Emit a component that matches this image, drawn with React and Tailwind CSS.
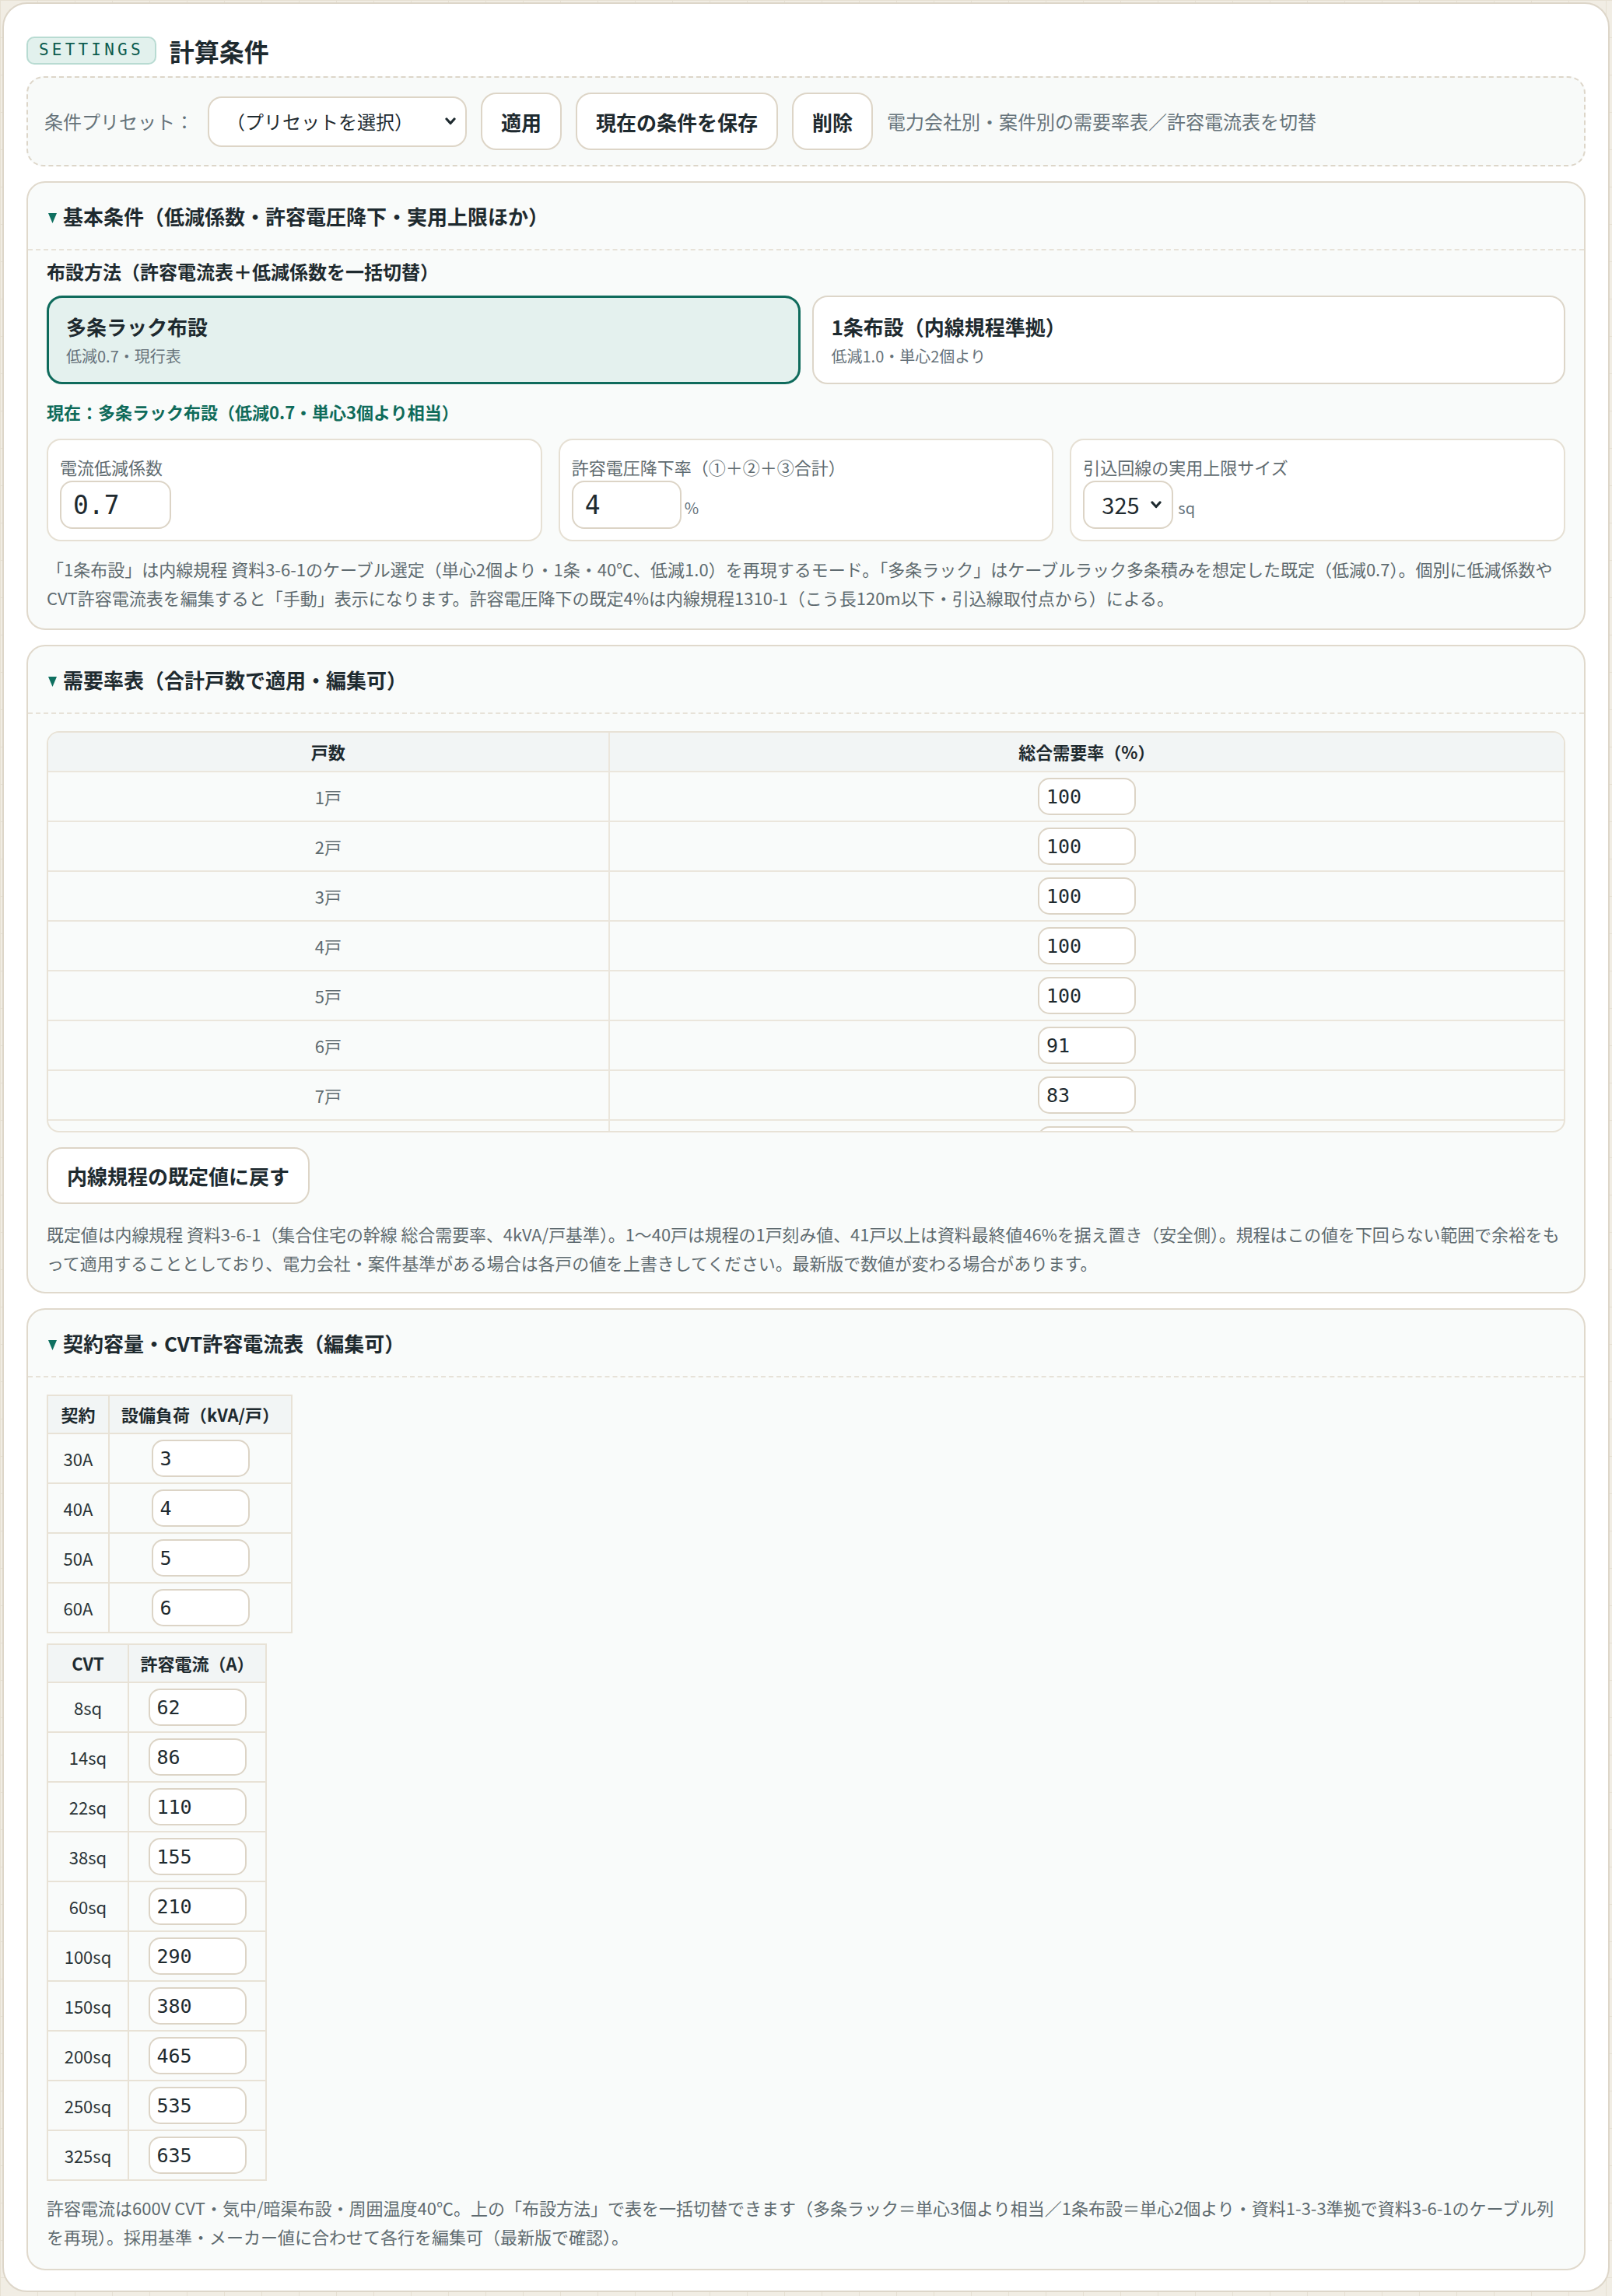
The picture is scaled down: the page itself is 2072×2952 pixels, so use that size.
import React from "react";

const mono = "font-['DejaVu_Sans_Mono',monospace]";

const demand = [
  ["1戸", "100"],
  ["2戸", "100"],
  ["3戸", "100"],
  ["4戸", "100"],
  ["5戸", "100"],
  ["6戸", "91"],
  ["7戸", "83"],
  ["8戸", "77"],
];

const contracts = [
  ["30A", "3"],
  ["40A", "4"],
  ["50A", "5"],
  ["60A", "6"],
];

const cvt = [
  ["8sq", "62"],
  ["14sq", "86"],
  ["22sq", "110"],
  ["38sq", "155"],
  ["60sq", "210"],
  ["100sq", "290"],
  ["150sq", "380"],
  ["200sq", "465"],
  ["250sq", "535"],
  ["325sq", "635"],
];

function Triangle() {
  return (
    <svg width="11" height="13" viewBox="0 0 11 13" className="translate-y-[3px]">
      <path d="M0 0 H11 L5.5 13 Z" fill="#0f7060" />
    </svg>
  );
}

function Chevron({ className }) {
  return (
    <svg width="14" height="10" viewBox="0 0 14 10" className={`pointer-events-none absolute top-1/2 -translate-y-1/2 ${className}`}>
      <path d="M2 2 L7 7.5 L12 2" stroke="#1e2a2f" strokeWidth="3.2" fill="none" strokeLinecap="round" strokeLinejoin="round" />
    </svg>
  );
}

function Section({ title, bodyClass, children }) {
  return (
    <section className="mt-[19px] rounded-[24px] border-2 border-[#e0d9cc] bg-[#f9fbfa]">
      <div className="flex items-center gap-[8px] border-b-2 border-dashed border-[#e7e2d8] px-[26px] py-[24px]">
        <Triangle />
        <h3 className="text-[26px] font-bold leading-[37px] text-[#1e2a2f]">{title}</h3>
      </div>
      <div className={bodyClass}>{children}</div>
    </section>
  );
}

function NumInput({ value }) {
  return (
    <input
      defaultValue={value}
      className={`${mono} h-[48px] w-[126px] rounded-[15px] border-2 border-[#dcd4c6] bg-white px-[9px] align-middle text-[25px] text-[#1e2a2f] outline-none`}
    />
  );
}

function Help({ children, className }) {
  return (
    <p className={`leading-[37px] text-[#5f6b70] ${className}`}>{children}</p>
  );
}

export default function App() {
  return (
    <div className="min-h-screen bg-[#f1ede4] bg-[linear-gradient(#e6e0d3_1px,transparent_1px),linear-gradient(90deg,#e6e0d3_1px,transparent_1px)] bg-[size:48px_48px] p-[3px] font-['Noto_Sans_CJK_JP',sans-serif]">
      <div className="rounded-[32px] border-2 border-[#ddd6c9] bg-white px-[29px] pt-[40px] pb-[26px]">
        {/* header */}
        <div className="flex h-[40px] items-center gap-[17px]">
          <span className={`${mono} flex h-[36px] items-center rounded-[10px] border-2 border-[#b8dbd2] bg-[#e2f1ed] px-[14px] text-[21px] tracking-[0.2em] text-[#0d5c4f]`}>
            SETTINGS
          </span>
          <h2 className="text-[32px] font-bold leading-[40px] text-[#1e2a2f]">計算条件</h2>
        </div>

        {/* presets */}
        <div className="mt-[13px] flex items-center gap-[18px] rounded-[22px] border-2 border-dashed border-[#ddd6c9] bg-[#f8faf9] px-[21px] py-[19px]">
          <span className="text-[24px] text-[#66737a]">条件プリセット：</span>
          <div className="relative">
            <select className="h-[65px] w-[333px] appearance-none rounded-[18px] border-2 border-[#ddd5c7] bg-white pl-[22px] pr-[40px] text-[24px] text-[#1e2a2f]">
              <option>（プリセットを選択）</option>
            </select>
            <Chevron className="right-[14px]" />
          </div>
          <button className="h-[74px] rounded-[20px] border-2 border-[#ddd5c7] bg-white px-[24px] text-[26px] font-bold text-[#1e2a2f]">適用</button>
          <button className="h-[74px] rounded-[20px] border-2 border-[#ddd5c7] bg-white px-[24px] text-[26px] font-bold text-[#1e2a2f]">現在の条件を保存</button>
          <button className="h-[74px] rounded-[20px] border-2 border-[#ddd5c7] bg-white px-[24px] text-[26px] font-bold text-[#1e2a2f]">削除</button>
          <span className="text-[24px] text-[#66737a]">電力会社別・案件別の需要率表／許容電流表を切替</span>
        </div>

        {/* basic conditions */}
        <div className="mt-[7px]">
          <Section title="基本条件（低減係数・許容電圧降下・実用上限ほか）" bodyClass="px-[24px] pt-[12px] pb-[21px]">
            <p className="text-[24px] font-bold leading-[30px] text-[#1e2a2f]">布設方法（許容電流表＋低減係数を一括切替）</p>
            <div className="mt-[16px] grid grid-cols-2 gap-[15px]">
              <div className="rounded-[20px] border-[3px] border-[#0f6b5c] bg-[#e4f1ee] px-[22px] py-[19px]">
                <div className="text-[26px] font-bold leading-[36px] text-[#1e2a2f]">多条ラック布設</div>
                <div className="mt-[6px] text-[20px] leading-[28px] text-[#66727a]">低減0.7・現行表</div>
              </div>
              <div className="rounded-[20px] border-2 border-[#ddd6c9] bg-white px-[23px] py-[20px]">
                <div className="text-[26px] font-bold leading-[36px] text-[#1e2a2f]">1条布設（内線規程準拠）</div>
                <div className="mt-[6px] text-[20px] leading-[28px] text-[#66727a]">低減1.0・単心2個より</div>
              </div>
            </div>
            <p className="mt-[19px] text-[22px] font-bold leading-[32px] text-[#0f6b5a]">現在：多条ラック布設（低減0.7・単心3個より相当）</p>
            <div className="mt-[19px] grid grid-cols-3 gap-[21px]">
              <div className="rounded-[18px] border-2 border-[#e6e0d4] bg-white px-[15px] pt-[18px] pb-[14px]">
                <div className="mb-[2px] text-[22px] leading-[32px] text-[#5f6b70]">電流低減係数</div>
                <input defaultValue="0.7" className={`${mono} h-[62px] w-[143px] rounded-[16px] border-2 border-[#dcd4c6] bg-white px-[15px] text-[33px] text-[#1e2a2f] outline-none`} />
              </div>
              <div className="rounded-[18px] border-2 border-[#e6e0d4] bg-white px-[15px] pt-[18px] pb-[14px]">
                <div className="mb-[2px] text-[22px] leading-[32px] text-[#5f6b70]">許容電圧降下率（①＋②＋③合計）</div>
                <div className="flex items-end gap-[4px]">
                  <input defaultValue="4" className={`${mono} h-[62px] w-[141px] rounded-[16px] border-2 border-[#dcd4c6] bg-white px-[15px] text-[33px] text-[#1e2a2f] outline-none`} />
                  <span className="pb-[12px] text-[20px] text-[#66727a]">%</span>
                </div>
              </div>
              <div className="rounded-[18px] border-2 border-[#e6e0d4] bg-white px-[15px] pt-[18px] pb-[14px]">
                <div className="mb-[2px] text-[22px] leading-[32px] text-[#5f6b70]">引込回線の実用上限サイズ</div>
                <div className="flex items-end gap-[6px]">
                  <div className="relative">
                    <select className="h-[62px] w-[116px] appearance-none rounded-[16px] border-2 border-[#dcd4c6] bg-white pl-[22px] pr-[30px] text-[29px] text-[#1e2a2f]">
                      <option>325</option>
                    </select>
                    <Chevron className="right-[15px]" />
                  </div>
                  <span className="pb-[12px] text-[20px] text-[#66727a]">sq</span>
                </div>
              </div>
            </div>
            <Help className="mt-[17px] text-[22px]">
              「1条布設」は内線規程 資料3-6-1のケーブル選定（単心2個より・1条・40℃、低減1.0）を再現するモード。「多条ラック」はケーブルラック多条積みを想定した既定（低減0.7）。個別に低減係数やCVT許容電流表を編集すると「手動」表示になります。許容電圧降下の既定4%は内線規程1310-1（こう長120m以下・引込線取付点から）による。
            </Help>
          </Section>
        </div>

        {/* demand table */}
        <Section title="需要率表（合計戸数で適用・編集可）" bodyClass="px-[24px] pt-[22px] pb-[19px]">
          <div className="h-[516px] overflow-hidden rounded-[16px] border-2 border-[#e8e2d6]">
            <table className="w-full border-collapse">
              <thead>
                <tr className="bg-[#f2f5f5]">
                  <th className="w-[37%] border-b-2 border-r-2 border-[#ebe6dc] py-[9px] text-[22px] font-bold leading-[31px] text-[#1e2a2f]">戸数</th>
                  <th className="border-b-2 border-[#ebe6dc] py-[9px] text-[22px] font-bold leading-[31px] text-[#1e2a2f]">総合需要率（%）</th>
                </tr>
              </thead>
              <tbody>
                {demand.map(([n, v]) => (
                  <tr key={n}>
                    <td className="border-b-2 border-r-2 border-[#ebe6dc] py-[7px] text-center text-[22px] text-[#5f6b70]">{n}</td>
                    <td className="border-b-2 border-[#ebe6dc] py-[7px] text-center">
                      <NumInput value={v} />
                    </td>
                  </tr>
                ))}
              </tbody>
            </table>
          </div>
          <button className="mt-[19px] h-[73px] rounded-[20px] border-2 border-[#ddd5c7] bg-white px-[24px] text-[26px] font-bold text-[#1e2a2f]">内線規程の既定値に戻す</button>
          <Help className="mt-[20px] text-[21.9px]">
            既定値は内線規程 資料3-6-1（集合住宅の幹線 総合需要率、4kVA/戸基準）。1〜40戸は規程の1戸刻み値、41戸以上は資料最終値46%を据え置き（安全側）。規程はこの値を下回らない範囲で余裕をもって適用することとしており、電力会社・案件基準がある場合は各戸の値を上書きしてください。最新版で数値が変わる場合があります。
          </Help>
        </Section>

        {/* contract / CVT */}
        <Section title="契約容量・CVT許容電流表（編集可）" bodyClass="px-[24px] pt-[22px] pb-[23px]">
          <table className="w-[316px] border-collapse">
            <thead>
              <tr className="bg-[#f2f5f5]">
                <th className="w-[79px] border-2 border-[#e8e2d6] py-[8px] text-[22px] font-bold leading-[31px] text-[#1e2a2f]">契約</th>
                <th className="border-2 border-[#e8e2d6] py-[8px] text-[22px] font-bold leading-[31px] text-[#1e2a2f]">設備負荷（kVA/戸）</th>
              </tr>
            </thead>
            <tbody>
              {contracts.map(([k, v]) => (
                <tr key={k}>
                  <td className="border-2 border-[#e8e2d6] py-[7px] text-center text-[22px] text-[#2a3437]">{k}</td>
                  <td className="border-2 border-[#e8e2d6] py-[7px] text-center">
                    <NumInput value={v} />
                  </td>
                </tr>
              ))}
            </tbody>
          </table>
          <table className="mt-[13px] w-[283px] border-collapse">
            <thead>
              <tr className="bg-[#f2f5f5]">
                <th className="w-[104px] border-2 border-[#e8e2d6] py-[8px] text-[22px] font-bold leading-[31px] text-[#1e2a2f]">CVT</th>
                <th className="border-2 border-[#e8e2d6] py-[8px] text-[22px] font-bold leading-[31px] text-[#1e2a2f]">許容電流（A）</th>
              </tr>
            </thead>
            <tbody>
              {cvt.map(([k, v]) => (
                <tr key={k}>
                  <td className="border-2 border-[#e8e2d6] py-[7px] text-center text-[22px] text-[#2a3437]">{k}</td>
                  <td className="border-2 border-[#e8e2d6] py-[7px] text-center">
                    <NumInput value={v} />
                  </td>
                </tr>
              ))}
            </tbody>
          </table>
          <Help className="mt-[16px] text-[22px]">
            許容電流は600V CVT・気中/暗渠布設・周囲温度40℃。上の「布設方法」で表を一括切替できます（多条ラック＝単心3個より相当／1条布設＝単心2個より・資料1-3-3準拠で資料3-6-1のケーブル列を再現）。採用基準・メーカー値に合わせて各行を編集可（最新版で確認）。
          </Help>
        </Section>
      </div>
    </div>
  );
}
